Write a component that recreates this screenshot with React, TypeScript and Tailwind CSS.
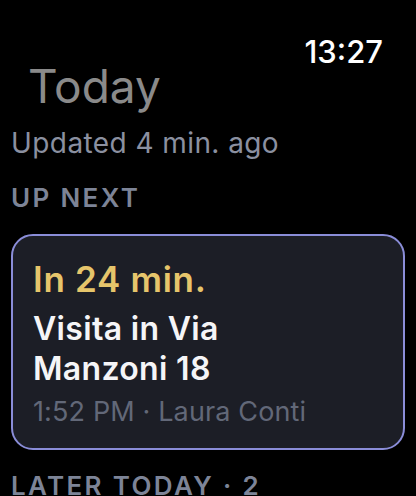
import React from "react";

export default function App() {
  return (
    <div
      className="w-[416px] h-[496px] overflow-hidden bg-black px-[11px]"
      style={{ fontFamily: "Inter, 'Noto Sans', sans-serif" }}
    >
      <div className="flex justify-end pt-[40px] pr-[22px]">
        <span className="text-[31px] leading-[24px] text-white font-medium">13:27</span>
      </div>
      <div className="pl-[17px] text-[46px] leading-[44px] text-[#8a8a8a]">Today</div>
      <div className="mt-[19px] text-[28px] leading-[32px] tracking-[0.015em] text-[#8b90a0]">
        Updated 4 min. ago
      </div>
      <div className="mt-[24px] text-[26px] leading-[30px] font-semibold tracking-[0.09em] text-[#7d8497]">
        UP NEXT
      </div>
      <div className="mt-[21px] rounded-[22px] border-2 border-[#8a8dd8] bg-[#1c1e26] pl-[20px] pr-[16px] pt-[23px] pb-[20px]">
        <div className="text-[35px] leading-[40px] font-semibold text-[#e6c56b] tracking-[0.02em]">In 24 min.</div>
        <div className="mt-[10px] text-[32px] leading-[40px] font-semibold tracking-[0.01em] text-[#f5f5f7]">
          Visita in Via
          <br />
          Manzoni 18
        </div>
        <div className="mt-[7px] text-[27px] leading-[32px] tracking-[0.005em] text-[#626878]">
          1:52 PM · Laura Conti
        </div>
      </div>
      <div className="mt-[21px] text-[26px] leading-[30px] font-semibold tracking-[0.09em] text-[#7d8497]">
        LATER TODAY · 2
      </div>
    </div>
  );
}
